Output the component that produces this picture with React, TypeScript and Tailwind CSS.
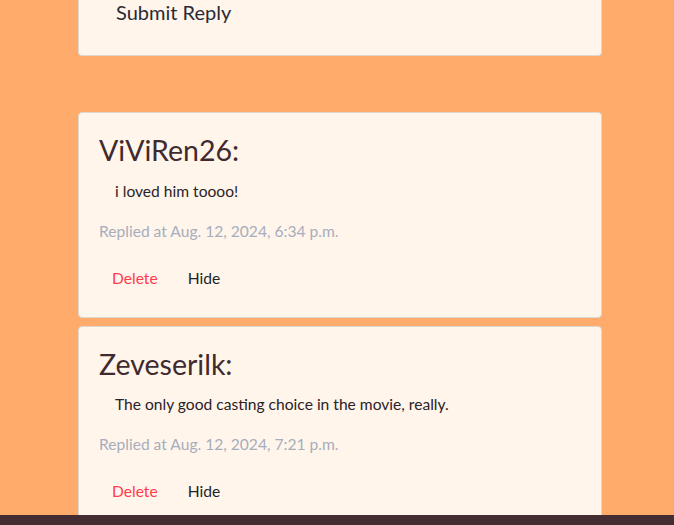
import React from "react";

type Reply = {
  author: string;
  text: string;
  time: string;
};

const replies: Reply[] = [
  {
    author: "ViViRen26:",
    text: "i loved him toooo!",
    time: "Replied at Aug. 12, 2024, 6:34 p.m.",
  },
  {
    author: "Zeveserilk:",
    text: "The only good casting choice in the movie, really.",
    time: "Replied at Aug. 12, 2024, 7:21 p.m.",
  },
];

function ReplyCard({ reply }: { reply: Reply }) {
  return (
    <div className="mb-[8px] rounded-[4px] border border-[#ddd6cf] bg-[#fff5eb] px-[20px] pb-[19px] pt-[21px]">
      <h3 className="text-[28.5px] leading-[33.6px] text-[#3f2a2f]">
        {reply.author}
      </h3>
      <p className="mt-[11px] pl-[16px] text-[15.6px] leading-[24px] text-[#2b2226]">
        {reply.text}
      </p>
      <p className="mt-[16px] text-[15.6px] leading-[24px] text-[#a7adbd]">
        {reply.time}
      </p>
      <div className="mt-[17px] flex gap-[4px]">
        <button className="h-[38px] border border-transparent px-[12px] text-[15.6px] text-[#ff3b4c]">
          Delete
        </button>
        <button className="h-[38px] border border-transparent px-[12px] text-[15.6px] text-[#212529]">
          Hide
        </button>
      </div>
    </div>
  );
}

export default function App() {
  return (
    <div
      className="flex h-[525px] flex-col overflow-hidden bg-[#ffab6b]"
      style={{ fontFamily: "Lato, 'Liberation Sans', sans-serif" }}
    >
      <main className="flex-1 overflow-hidden">
        <div className="ml-[78px] w-[524px]">
          {/* reply form (scrolled past) */}
          <div className="rounded-b-[4px] border border-t-0 border-[#ddd6cf] bg-[#fff5eb] pb-[30px]">
            <button className="ml-[37px] block text-[20px] leading-[25px] text-[#2a2a35]">
              Submit Reply
            </button>
          </div>

          <div className="mt-[56px]">
            {replies.map((r) => (
              <ReplyCard key={r.author} reply={r} />
            ))}
          </div>
        </div>
      </main>
      <footer className="h-[10px] shrink-0 bg-[#432d32]" />
    </div>
  );
}
